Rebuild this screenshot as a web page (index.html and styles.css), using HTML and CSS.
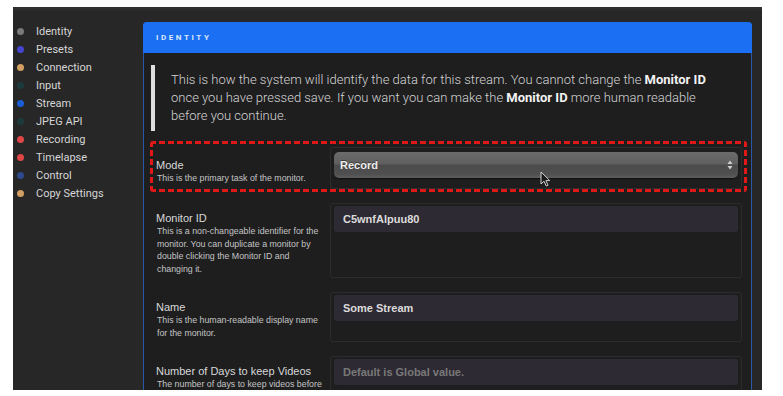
FILE: index.html
```html
<!DOCTYPE html>
<html lang="en">

<head>
    <meta charset="UTF-8">
    <meta name="viewport" content="width=device-width, initial-scale=1.0">
    <title>Monitor Settings - Identity</title>
    <link rel="stylesheet" href="styles.css">
</head>

<body>
    <div class="frame">
        <ul class="sidebar">
            <li><span class="dot" style="background:#7a7a7a"></span>Identity</li>
            <li><span class="dot" style="background:#4545d0"></span>Presets</li>
            <li><span class="dot" style="background:#d29e62"></span>Connection</li>
            <li><span class="dot" style="background:#1d3a3c"></span>Input</li>
            <li><span class="dot" style="background:#1a5ed6"></span>Stream</li>
            <li><span class="dot" style="background:#1d3a3c"></span>JPEG API</li>
            <li><span class="dot" style="background:#e04646"></span>Recording</li>
            <li><span class="dot" style="background:#e04646"></span>Timelapse</li>
            <li><span class="dot" style="background:#2f4a8c"></span>Control</li>
            <li><span class="dot" style="background:#d29e62"></span>Copy Settings</li>
        </ul>

        <div class="main">
            <div class="panel">
                <div class="panel-header">Identity</div>
                <div class="panel-body">
                    <blockquote class="intro">
                        This is how the system will identify the data for this stream. You cannot change the
                        <b>Monitor ID</b> once you have pressed save. If you want you can make the <b>Monitor ID</b>
                        more human readable before you continue.
                    </blockquote>

                    <div class="row row-mode highlight">
                        <div class="label-col">
                            <div class="label">Mode</div>
                            <div class="desc">This is the primary task of the monitor.</div>
                        </div>
                        <div class="field-box">
                            <div class="select">
                                <span>Record</span>
                                <svg class="select-arrows" width="6" height="10" viewBox="0 0 6 10">
                                    <path d="M3 0.5 L5.5 4 L0.5 4 Z" fill="#cfcfcf" />
                                    <path d="M3 9.5 L5.5 6 L0.5 6 Z" fill="#cfcfcf" />
                                </svg>
                            </div>
                        </div>
                        <svg class="cursor" width="11" height="16" viewBox="0 0 11 16">
                            <path d="M1 1 L1 13 L4 10.2 L6.2 15 L8 14.2 L5.9 9.6 L9.8 9.6 Z" fill="#1a1a1a"
                                stroke="#d0d0d0" stroke-width="1" stroke-linejoin="round" />
                        </svg>
                    </div>

                    <div class="row">
                        <div class="label-col">
                            <div class="label">Monitor ID</div>
                            <div class="desc">This is a non-changeable identifier for the monitor. You can duplicate
                                a monitor by double clicking the Monitor ID and changing it.</div>
                        </div>
                        <div class="field-box">
                            <div class="input">C5wnfAlpuu80</div>
                        </div>
                    </div>

                    <div class="row">
                        <div class="label-col">
                            <div class="label">Name</div>
                            <div class="desc">This is the human-readable display name for the monitor.</div>
                        </div>
                        <div class="field-box">
                            <div class="input">Some Stream</div>
                        </div>
                    </div>

                    <div class="row">
                        <div class="label-col">
                            <div class="label">Number of Days to keep Videos</div>
                            <div class="desc">The number of days to keep videos before purging.</div>
                        </div>
                        <div class="field-box">
                            <div class="input placeholder">Default is Global value.</div>
                        </div>
                    </div>
                </div>
            </div>
        </div>
    </div>
</body>

</html>
```

FILE: styles.css
```css
body {
    margin: 0;
    padding: 0;
    background: #ffffff;
    font-family: Roboto, 'Liberation Sans', sans-serif;
}

.frame {
    display: flex;
    margin: 7px 0 0 13px;
    width: 749px;
    height: 383px;
    box-sizing: border-box;
    background: #272727;
    border-top: 3px solid #303030;
    overflow: hidden;
}

/* Left menu */
.sidebar {
    flex: none;
    width: 130px;
    margin: 0;
    padding: 12px 0 0 4px;
    box-sizing: border-box;
    list-style: none;
}

.sidebar li {
    display: flex;
    align-items: center;
    height: 18px;
    font-size: 11px;
    color: #d6d6d6;
}

.dot {
    flex: none;
    width: 7px;
    height: 7px;
    border-radius: 50%;
    margin-right: 12px;
}

/* Main panel */
.main {
    flex: 1;
    padding: 12px 10px 0 0;
}

.panel {
    height: 100%;
    background: #1e1e1f;
    border: 1px solid #2a58a6;
    border-top: none;
    border-bottom: none;
    border-radius: 4px 4px 0 0;
}

.panel-header {
    height: 31px;
    margin: 0 -1px;
    padding-left: 13px;
    background: #1b6ff2;
    border-radius: 4px 4px 0 0;
    color: #dce8ff;
    font-size: 8px;
    font-weight: bold;
    letter-spacing: 2.6px;
    text-transform: uppercase;
    line-height: 31px;
}

.panel-body {
    padding: 12px 7px 0 7px;
}

.intro {
    margin: 0 0 16px 0;
    padding: 6px 14px 6px 16px;
    border-left: 4px solid #dedede;
    color: #d4d4d4;
    font-size: 13px;
    font-weight: 300;
    line-height: 18px;
}

.intro b {
    color: #f2f2f2;
    font-weight: 700;
}

/* Form rows */
.row {
    position: relative;
    display: flex;
    margin: 0 2px 14px 5px;
    font-family: 'Liberation Sans', Arial, sans-serif;
}

.label-col {
    flex: none;
    width: 174px;
    box-sizing: border-box;
    padding: 8px 6px 3px 0;
}

.label {
    font-size: 11px;
    line-height: 14px;
    color: #d8d8d8;
}

.desc {
    font-size: 8.8px;
    line-height: 12.5px;
    color: #c4c4c4;
    padding-left: 1px;
}

.field-box {
    flex: 1;
    padding: 2px 3px;
    border: 1px solid #2c2c2c;
    border-radius: 3px;
}

.input {
    height: 26px;
    padding-left: 9px;
    border-radius: 3px;
    background: #2e2a33;
    color: #dcdcdc;
    font-size: 11px;
    font-weight: bold;
    line-height: 26px;
}

.input.placeholder {
    color: #797979;
}

/* Mode row with the red annotation */
.row-mode {
    min-height: 42px;
}

.row-mode .label-col {
    padding-top: 11px;
}

.row-mode .field-box {
    padding-top: 4px;
}

.select {
    display: flex;
    align-items: center;
    justify-content: space-between;
    height: 26px;
    padding: 0 5px 0 6px;
    box-sizing: border-box;
    border-radius: 5px;
    background: linear-gradient(#6c6c6c 0%, #5f5f5f 45%, #4b4b4b 52%, #4f4f4f 85%, #5e5e5e 100%);
    box-shadow: 0 1px 1px rgba(0, 0, 0, 0.5);
    color: #ececec;
    font-size: 11px;
    font-weight: bold;
    text-shadow: 0 -1px 0 rgba(0, 0, 0, 0.4);
}

.highlight::before {
    content: "";
    position: absolute;
    top: -6px;
    left: -6px;
    right: -5px;
    bottom: -3px;
    border-radius: 3px;
    pointer-events: none;
    background:
        repeating-linear-gradient(90deg, #e01818 0 6px, transparent 6px 9px) top / 100% 3px no-repeat,
        repeating-linear-gradient(90deg, #e01818 0 6px, transparent 6px 9px) bottom / 100% 3px no-repeat,
        repeating-linear-gradient(180deg, #e01818 0 6px, transparent 6px 9px) left / 3px 100% no-repeat,
        repeating-linear-gradient(180deg, #e01818 0 6px, transparent 6px 9px) right / 3px 100% no-repeat;
}

.cursor {
    position: absolute;
    left: 384px;
    top: 24px;
}
```
